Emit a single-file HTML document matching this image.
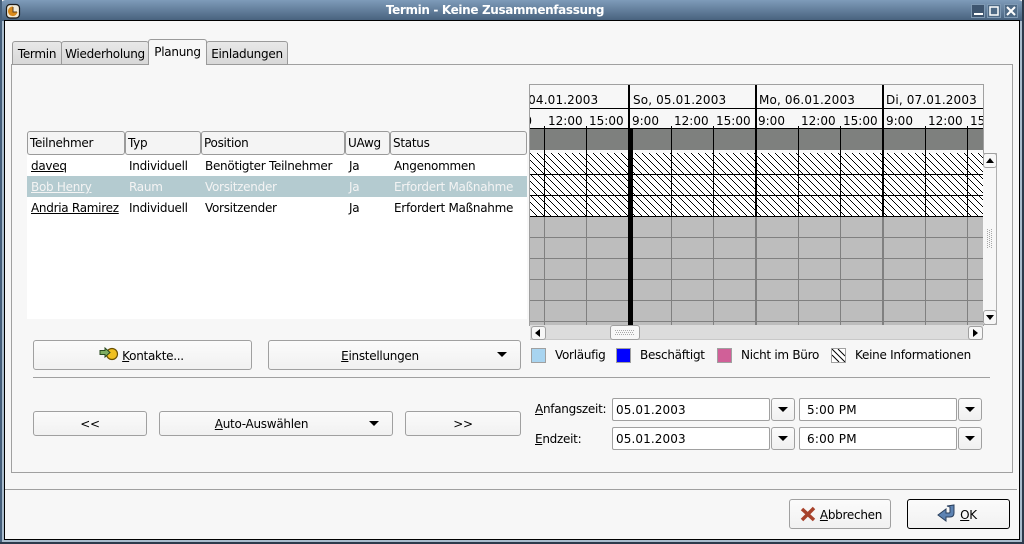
<!DOCTYPE html>
<html><head><meta charset="utf-8"><style>
html,body{margin:0;padding:0;background:#f7f7f7}
#w{position:relative;width:1024px;height:544px;overflow:hidden;background:#f7f7f7;font:12px/14px "DejaVu Sans",sans-serif;letter-spacing:-.28px;color:#000}
#w div{position:absolute;box-sizing:border-box;white-space:nowrap}
#w svg{letter-spacing:0}
.tab{background:linear-gradient(#e8e8e8,#d8d8d8);border:1px solid #9a9a9a;border-radius:3px 3px 0 0;text-align:center;padding-top:5px;height:24px}
.btn{background:linear-gradient(#fbfbfb,#f1f1f1);border:1px solid #a0a0a0;border-radius:3px;text-align:center}
.hd{top:131px;height:24px;border:1px solid #9a9a9a;border-radius:3px;background:#f4f4f4;padding:4px 0 0 2px}
.c{height:14px}
.sel{color:#f4f4f4}
.inp{background:#fff;border:1px solid #a0a0a0;border-radius:2px;padding:4px 0 0 3px;height:23px;letter-spacing:.1px}
.arr{background:linear-gradient(#fbfbfb,#f0f0f0);border:1px solid #a0a0a0;border-radius:3px;height:23px}
.tri{width:0;height:0;border-left:5px solid transparent;border-right:5px solid transparent;border-top:5px solid #000}
.sq{width:15px;height:15px;top:348px;border:1px solid #a0a0a0}
u{text-decoration:underline}
</style></head><body><div id="w">
<!-- window frame -->
<div style="left:0;top:0;width:1024px;height:544px;background:#a9bccd;border-radius:6px 6px 0 0"></div>
<div style="left:0;top:0;width:1024px;height:21px;background:linear-gradient(#7e9bb9,#46607c);border-radius:6px 6px 0 0"></div>
<div style="left:0;top:0;width:2px;height:544px;background:#46607c"></div>
<div style="left:1022px;top:0;width:2px;height:544px;background:#2c3a4c"></div>
<div style="left:0;top:542px;width:1024px;height:2px;background:#2c3a4c"></div>
<div style="left:4px;top:20px;width:1016px;height:520px;background:#f7f7f7;border:1px solid #000"></div>
<div style="left:0;top:3px;width:990px;text-align:center;color:#fff;font-weight:bold;font-size:12px;letter-spacing:-.35px">Termin - Keine Zusammenfassung</div>
<!-- window icon -->
<svg style="position:absolute;left:5px;top:3px" width="16" height="16"><rect x="1.500" y="1.500" width="13" height="13.500" rx="3.500" fill="#f1ead8" stroke="#1c1c1c" stroke-width="1.200"/><path d="M8 3.500A4.800 4.800 0 1 0 12.500 9H8z" fill="#d98a1c"/><path d="M8 4v5h4" stroke="#5a4020" fill="none"/></svg>
<!-- window buttons -->
<svg style="position:absolute;left:970px;top:3px" width="50" height="15">
<rect x="1.500" y="1.500" width="13" height="13" fill="#3e556f" stroke="#7f99b3"/><rect x="4" y="10" width="9" height="2" fill="#fff"/>
<rect x="17.500" y="1.500" width="13" height="13" fill="#4f6a85" stroke="#7f99b3"/><rect x="20" y="4" width="8" height="8" fill="none" stroke="#fff" stroke-width="1.500"/>
<rect x="34.500" y="1.500" width="13" height="13" fill="#4f6a85" stroke="#7f99b3"/><path d="M37 4l8 8M45 4l-8 8" stroke="#fff" stroke-width="2"/>
</svg>
<!-- tabs -->
<div style="left:11px;top:64px;width:1002px;height:409px;border:1px solid #a0a0a0;background:#f7f7f7"></div>
<div class="tab" style="left:12px;top:41px;width:50px;">Termin</div>
<div class="tab" style="left:61px;top:41px;width:88px;">Wiederholung</div>
<div class="tab" style="left:206px;top:41px;width:82px;">Einladungen</div>
<div style="left:148px;top:39px;width:59px;height:26px;background:#f7f7f7;border:1px solid #9a9a9a;border-bottom:0;border-radius:3px 3px 0 0;text-align:center;padding-top:5px">Planung</div>
<!-- table -->
<div style="left:27px;top:155px;width:500px;height:164px;background:#fff"></div>
<div class="hd" style="left:27px;width:98px">Teilnehmer</div>
<div class="hd" style="left:125px;width:76px">Typ</div>
<div class="hd" style="left:201px;width:144px">Position</div>
<div class="hd" style="left:345px;width:45px">UAwg</div>
<div class="hd" style="left:390px;width:137px">Status</div>
<div style="left:27px;top:176px;width:500px;height:21px;background:#b4cbd0"></div>
<div class="c" style="left:31px;top:159px"><u>daveq</u></div><div class="c" style="left:129px;top:159px">Individuell</div><div class="c" style="left:205px;top:159px">Benötigter Teilnehmer</div><div class="c" style="left:349px;top:159px">Ja</div><div class="c" style="left:394px;top:159px">Angenommen</div>
<div class="c sel" style="left:31px;top:180px"><u>Bob Henry</u></div><div class="c sel" style="left:129px;top:180px">Raum</div><div class="c sel" style="left:205px;top:180px">Vorsitzender</div><div class="c sel" style="left:349px;top:180px">Ja</div><div class="c sel" style="left:394px;top:180px">Erfordert Maßnahme</div>
<div class="c" style="left:31px;top:201px"><u>Andria Ramirez</u></div><div class="c" style="left:129px;top:201px">Individuell</div><div class="c" style="left:205px;top:201px">Vorsitzender</div><div class="c" style="left:349px;top:201px">Ja</div><div class="c" style="left:394px;top:201px">Erfordert Maßnahme</div>
<!-- chart -->
<svg style="position:absolute;left:529px;top:84px;font:12px 'DejaVu Sans',sans-serif" width="456" height="242" viewBox="529 84 456 242">
<defs>
<pattern id="h" x="530" y="153" width="7" height="7" patternUnits="userSpaceOnUse"><g fill="#000"><rect x="0" y="0" width="1" height="1"/><rect x="1" y="1" width="1" height="1"/><rect x="2" y="2" width="1" height="1"/><rect x="3" y="3" width="1" height="1"/><rect x="4" y="4" width="1" height="1"/><rect x="5" y="5" width="1" height="1"/><rect x="6" y="6" width="1" height="1"/></g></pattern>
<clipPath id="cp"><rect x="530" y="85" width="453" height="240"/></clipPath>
</defs>
<rect x="529.500" y="84.500" width="454" height="241" fill="#f7f7f7" stroke="#a0a0a0"/>
<g clip-path="url(#cp)">
<rect x="530" y="129" width="453" height="21" fill="#7e807e"/>
<rect x="530" y="150" width="453" height="3" fill="#f7f7f7"/>
<rect x="530" y="153" width="453" height="63" fill="#fff"/>
<rect x="530" y="153" width="453" height="63" fill="url(#h)"/>
<rect x="530" y="217" width="453" height="108" fill="#bdbdbd"/>
<g fill="#000">
<rect x="530" y="108" width="453" height="1"/><rect x="530" y="128" width="453" height="1"/>
<rect x="530" y="174" width="453" height="1"/><rect x="530" y="195" width="453" height="1"/><rect x="530" y="216" width="453" height="1"/>
</g>
<g fill="#808080"><rect x="530" y="237" width="453" height="1"/><rect x="530" y="258" width="453" height="1"/><rect x="530" y="279" width="453" height="1"/><rect x="530" y="300" width="453" height="1"/><rect x="530" y="321" width="453" height="1"/></g>
<g fill="#000">
<rect x="544" y="126" width="1" height="91"/><rect x="586" y="126" width="1" height="91"/><rect x="671" y="126" width="1" height="91"/><rect x="713" y="126" width="1" height="91"/><rect x="798" y="126" width="1" height="91"/><rect x="840" y="126" width="1" height="91"/><rect x="925" y="126" width="1" height="91"/><rect x="967" y="126" width="1" height="91"/>
<rect x="628" y="85" width="2" height="44"/><rect x="755" y="85" width="2" height="132"/><rect x="882" y="85" width="2" height="132"/>
<rect x="628" y="129" width="5" height="196"/>
</g>
<g fill="#808080"><rect x="544" y="217" width="1" height="108"/><rect x="586" y="217" width="1" height="108"/><rect x="671" y="217" width="1" height="108"/><rect x="713" y="217" width="1" height="108"/><rect x="798" y="217" width="1" height="108"/><rect x="840" y="217" width="1" height="108"/><rect x="925" y="217" width="1" height="108"/><rect x="967" y="217" width="1" height="108"/><rect x="755" y="217" width="2" height="108"/><rect x="882" y="217" width="2" height="108"/></g>
<g fill="#000">
<text x="505" y="104" letter-spacing=".14">Sa, 04.01.2003</text>
<text x="633" y="104" letter-spacing=".14">So, 05.01.2003</text>
<text x="759" y="104" letter-spacing=".14">Mo, 06.01.2003</text>
<text x="886" y="104" letter-spacing=".14">Di, 07.01.2003</text>
<text x="505" y="125">9:00</text><text x="548" y="125">12:00</text><text x="589" y="125">15:00</text>
<text x="632" y="125">9:00</text><text x="674" y="125">12:00</text><text x="716" y="125">15:00</text>
<text x="758" y="125">9:00</text><text x="801" y="125">12:00</text><text x="843" y="125">15:00</text>
<text x="886" y="125">9:00</text><text x="928" y="125">12:00</text><text x="970" y="125">15:00</text>
</g>
</g>
</svg>
<!-- h scrollbar -->
<div style="left:530px;top:325px;width:453px;height:15px;background:#dcdcdc;border-bottom:1px solid #c8c8c8"></div>
<div class="btn" style="left:531px;top:326px;width:15px;height:14px;background:#f7f7f7"></div>
<svg style="position:absolute;left:535px;top:329px" width="6" height="8"><path d="M5 0v8L0 4z" fill="#000"/></svg>
<div class="btn" style="left:610px;top:325px;width:30px;height:15px;background:#f7f7f7"></div>
<svg style="position:absolute;left:615px;top:329px" width="20" height="7"><path d="M0 1.500h19M1 3.500h18M0 5.500h19" stroke="#a8a8a8" stroke-dasharray="1 1" fill="none"/></svg>
<div class="btn" style="left:968px;top:326px;width:15px;height:14px;background:#f7f7f7"></div>
<svg style="position:absolute;left:973px;top:329px" width="6" height="8"><path d="M0 0v8L5 4z" fill="#000"/></svg>
<!-- v scrollbar -->
<div style="left:983px;top:153px;width:14px;height:172px;background:#f7f7f7;border:1px solid #b0b0b0;border-left:0"></div>
<div class="btn" style="left:983px;top:153px;width:14px;height:15px;background:#f7f7f7"></div>
<svg style="position:absolute;left:986px;top:158px" width="8" height="5"><path d="M0 5h8L4 0z" fill="#000"/></svg>
<svg style="position:absolute;left:986px;top:229px" width="8" height="19"><path d="M1.500 0v19M3.500 1v18M5.500 0v19" stroke="#a8a8a8" stroke-dasharray="1 1" fill="none"/></svg>
<div class="btn" style="left:983px;top:310px;width:14px;height:15px;background:#f7f7f7"></div>
<svg style="position:absolute;left:986px;top:315px" width="8" height="5"><path d="M0 0h8L4 5z" fill="#000"/></svg>
<!-- action buttons -->
<div class="btn" style="left:33px;top:340px;width:219px;height:30px;padding:8px 0 0 0"><span style="display:inline-block;width:21px"></span><u>K</u>ontakte...</div>
<svg style="position:absolute;left:99px;top:346px" width="20" height="15"><circle cx="13" cy="8" r="5.500" fill="#f0c020" stroke="#6a5000" stroke-width="1.200"/><path d="M1 4.500h5V2l5 4.500-5 4.500V8.500H1z" fill="#7fae62" stroke="#2a4a20"/></svg>
<div class="btn" style="left:268px;top:340px;width:253px;height:30px;padding:8px 29px 0 0"><u>E</u>instellungen</div>
<svg style="position:absolute;left:497px;top:352px" width="11" height="6"><path d="M0 0h10L5 5z" fill="#000"/></svg>
<!-- legend -->
<div class="sq" style="left:531px;background:#a8d4f0"></div><div style="left:555px;top:348px">Vorläufig</div>
<div class="sq" style="left:616px;background:#0000ff"></div><div style="left:640px;top:348px">Beschäftigt</div>
<div class="sq" style="left:717px;background:#d06098"></div><div style="left:741px;top:348px">Nicht im Büro</div>
<div class="sq" style="left:831px;background:#fff"></div>
<svg style="position:absolute;left:832px;top:349px" width="13" height="13"><path d="M0 0l13 13M6 0l7 7M0 6l7 7" stroke="#000" fill="none"/></svg>
<div style="left:855px;top:348px">Keine Informationen</div>
<div style="left:33px;top:377px;width:957px;height:1px;background:#a0a0a0"></div>
<!-- lower buttons -->
<div class="btn" style="left:33px;top:411px;width:114px;height:25px;padding-top:5px">&lt;&lt;</div>
<div class="btn" style="left:159px;top:411px;width:234px;height:25px;padding:5px 29px 0 0"><u>A</u>uto-Auswählen</div>
<svg style="position:absolute;left:369px;top:421px" width="11" height="6"><path d="M0 0h10L5 5z" fill="#000"/></svg>
<div class="btn" style="left:405px;top:411px;width:116px;height:25px;padding-top:5px">&gt;&gt;</div>
<!-- time fields -->
<div style="left:535px;top:402px"><u>A</u>nfangszeit:</div>
<div style="left:535px;top:432px"><u>E</u>ndzeit:</div>
<div class="inp" style="left:612px;top:398px;width:158px">05.01.2003</div><div class="arr" style="left:771px;top:398px;width:24px"><div class="tri" style="left:6px;top:8px"></div></div>
<div class="inp" style="left:799px;top:398px;width:158px;padding-left:7px;letter-spacing:.2px">5:00 PM</div><div class="arr" style="left:958px;top:398px;width:24px"><div class="tri" style="left:6px;top:8px"></div></div>
<div class="inp" style="left:612px;top:427px;width:158px">05.01.2003</div><div class="arr" style="left:771px;top:427px;width:24px"><div class="tri" style="left:6px;top:8px"></div></div>
<div class="inp" style="left:799px;top:427px;width:158px;padding-left:7px;letter-spacing:.2px">6:00 PM</div><div class="arr" style="left:958px;top:427px;width:24px"><div class="tri" style="left:6px;top:8px"></div></div>
<!-- bottom -->
<div style="left:5px;top:489px;width:1012px;height:1px;background:#a0a0a0"></div>
<div class="btn" style="left:789px;top:499px;width:102px;height:30px;padding:8px 0 0 22px"><u>A</u>bbrechen</div>
<svg style="position:absolute;left:800px;top:506px" width="16" height="16"><path d="M2 3l12 11M14 2L2 14" stroke="#a8432c" stroke-width="3.500" fill="none"/></svg>
<div class="btn" style="left:907px;top:499px;width:103px;height:30px;border-color:#000;padding:8px 0 0 20px"><u>O</u>K</div>
<svg style="position:absolute;left:937px;top:503px" width="20" height="20"><path d="M10 3l7-1v8q0 4-4 4H9v4L1 12l8-6v4h3q1 0 1-1V4z" fill="#5d83b3" stroke="#2a3f5c"/></svg>
</div></body></html>
